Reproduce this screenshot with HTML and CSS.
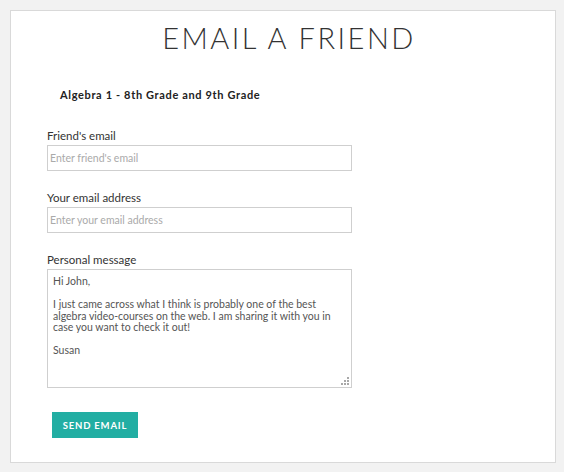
FILE: index.html
```html
<!DOCTYPE html>
<html>
<head>
<meta charset="utf-8">
<link rel="stylesheet" href="styles.css">
</head>
<body>
<div class="panel">
  <h1 class="title">EMAIL A FRIEND</h1>
  <p class="course">Algebra 1 - 8th Grade and 9th Grade</p>
  <form class="form">
    <div class="field">
      <label class="label">Friend's email</label>
      <input class="input" type="text" placeholder="Enter friend's email">
    </div>
    <div class="field">
      <label class="label">Your email address</label>
      <input class="input" type="text" placeholder="Enter your email address">
    </div>
    <div class="field">
      <label class="label">Personal message</label>
      <div class="area-wrap">
        <textarea class="area">Hi John,

I just came across what I think is probably one of the best
algebra video-courses on the web. I am sharing it with you in
case you want to check it out!

Susan</textarea>
        <svg class="grip" width="8" height="8" viewBox="0 0 8 8">
          <rect x="6" y="0" width="2" height="2" fill="#a8a8a8"/>
          <rect x="3" y="3" width="2" height="2" fill="#a8a8a8"/>
          <rect x="6" y="3" width="2" height="2" fill="#a8a8a8"/>
          <rect x="0" y="6" width="2" height="2" fill="#a8a8a8"/>
          <rect x="3" y="6" width="2" height="2" fill="#a8a8a8"/>
          <rect x="6" y="6" width="2" height="2" fill="#a8a8a8"/>
        </svg>
      </div>
    </div>
    <button class="send" type="button">SEND EMAIL</button>
  </form>
</div>
</body>
</html>
```
FILE: styles.css
```css
html, body {
  margin: 0;
  padding: 0;
}
body {
  background: #f2f2f2;
  padding: 10px;
  font-family: Lato, "Liberation Sans", sans-serif;
  color: #333;
}
.panel {
  box-sizing: border-box;
  width: 546px;
  height: 453px;
  background: #fff;
  border: 1px solid #d9d9d9;
  padding: 0 36px;
}
.title {
  margin: 12px 0 0;
  padding-left: 12px;
  text-align: center;
  font-weight: 300;
  font-size: 29px;
  line-height: 29px;
  letter-spacing: 2.5px;
  color: #333;
}
.course {
  margin: 37px 0 0 13px;
  font-weight: 700;
  font-size: 11px;
  line-height: 12px;
  letter-spacing: 0.65px;
  color: #222;
}
.form {
  margin-top: 28px;
  display: flex;
  flex-direction: column;
  gap: 20px;
}
.field {
  display: flex;
  flex-direction: column;
  gap: 3px;
}
.label {
  font-size: 11.5px;
  line-height: 13px;
  color: #333;
}
.input {
  box-sizing: border-box;
  width: 305px;
  height: 26px;
  border: 1px solid #cfcfcf;
  padding: 0 2px;
  margin: 0;
  font-family: Lato, "Liberation Sans", sans-serif;
  font-size: 10.5px;
  color: #555;
  outline: none;
}
.input::placeholder {
  color: #aaa;
}
.area-wrap {
  position: relative;
  width: 305px;
  height: 119px;
}
.area {
  display: block;
  box-sizing: border-box;
  width: 305px;
  height: 119px;
  margin: 0;
  border: 1px solid #cfcfcf;
  padding: 6px 5px;
  font-family: Lato, "Liberation Sans", sans-serif;
  font-size: 10.5px;
  line-height: 11.5px;
  color: #555;
  resize: none;
  overflow: hidden;
  outline: none;
}
.grip {
  position: absolute;
  right: 3px;
  bottom: 3px;
}
.send {
  align-self: flex-start;
  margin: 4px 0 0 5px;
  width: 86px;
  height: 26px;
  border: none;
  background: #22aea3;
  color: #fff;
  font-family: Lato, "Liberation Sans", sans-serif;
  font-weight: 700;
  font-size: 9.5px;
  letter-spacing: 0.8px;
  padding: 0;
  cursor: pointer;
}
```
